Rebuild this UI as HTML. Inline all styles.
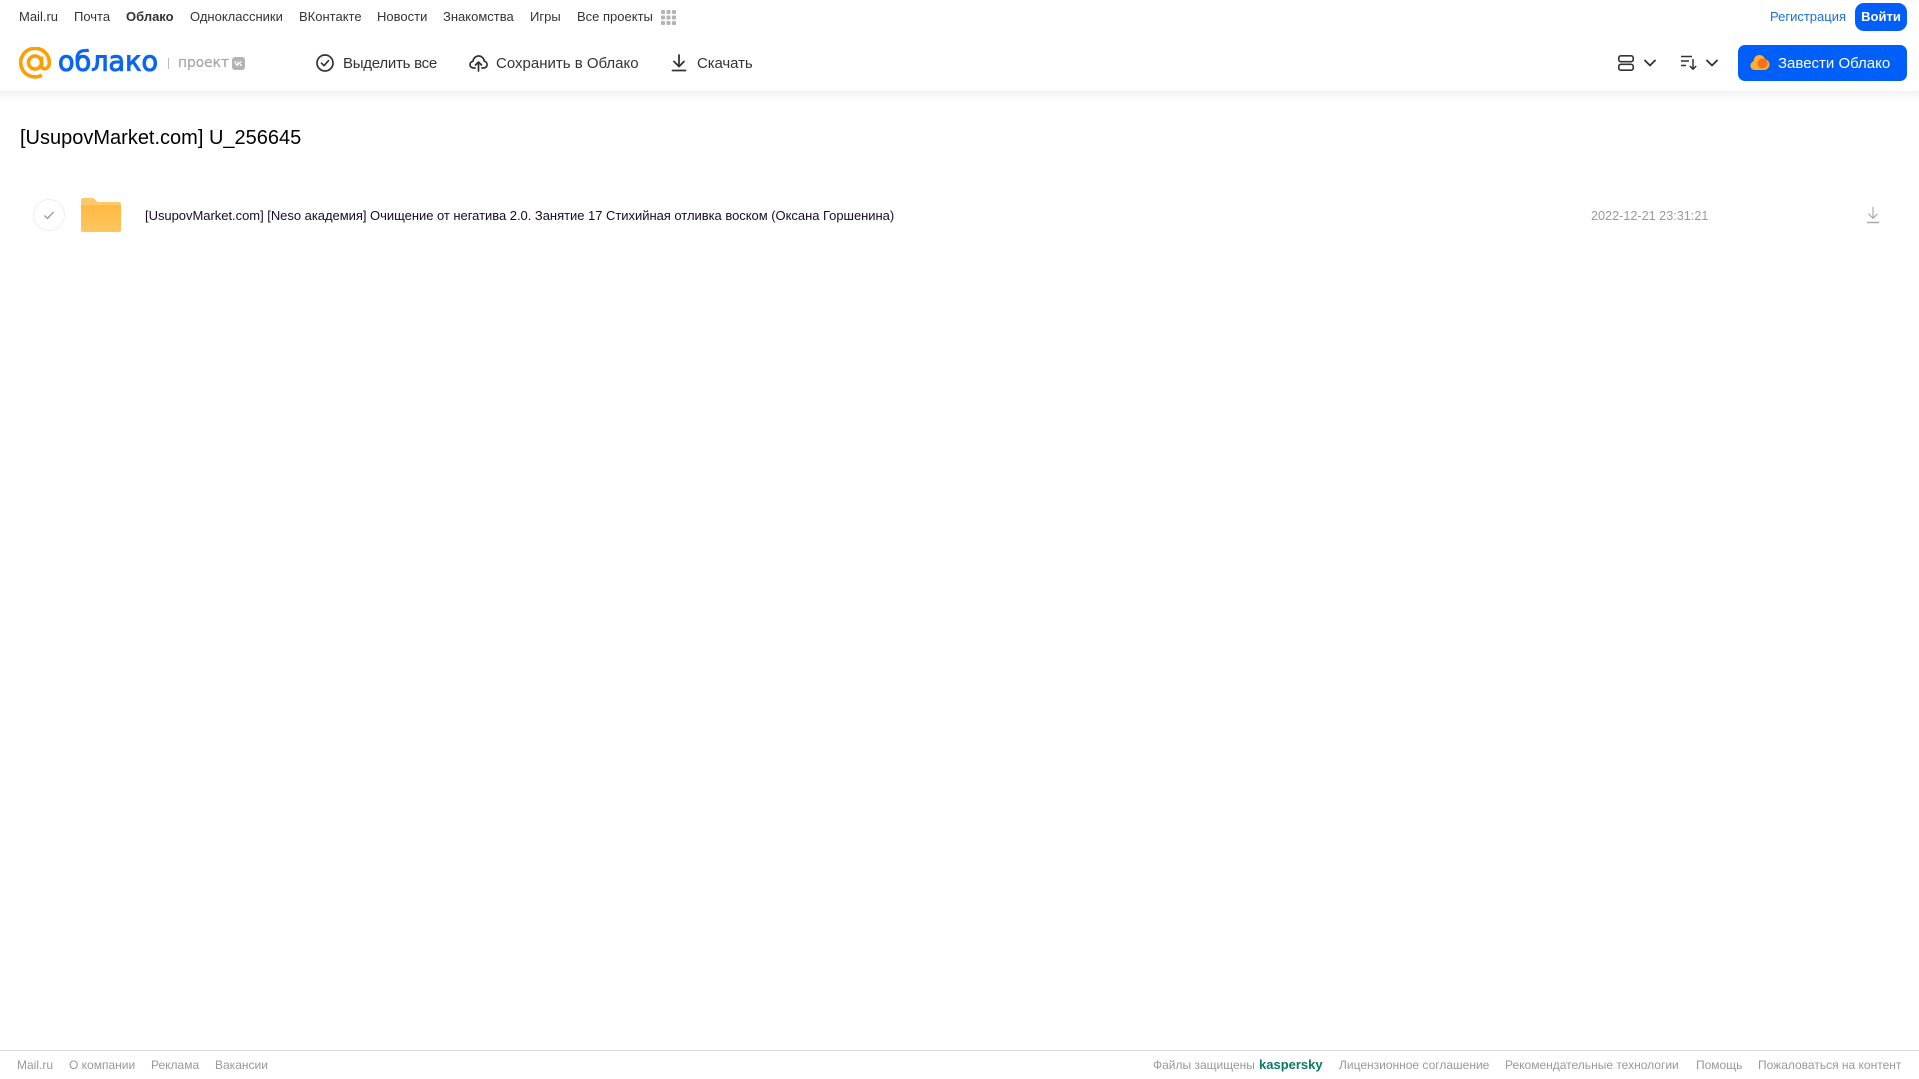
<!DOCTYPE html>
<html lang="ru">
<head>
<meta charset="utf-8">
<title>Облако</title>
<style>
html,body{margin:0;padding:0;background:#fff;}
body{width:1919px;height:1079px;position:relative;overflow:hidden;font-family:"Liberation Sans",Arial,sans-serif;}
.t{position:absolute;white-space:nowrap;line-height:20px;}
.n{top:7px;font-size:13px;color:#333;}
.a{top:54px;font-size:15px;color:#333;}
.f{top:1055px;font-size:12px;color:#999;}
svg{position:absolute;display:block;}
#shadow{position:absolute;left:0;top:91px;width:1919px;height:10px;background:linear-gradient(#f3f3f3,#fff);}
#line{position:absolute;left:0;top:1050px;width:1919px;height:1px;background:#d9d9d9;}
.btn{position:absolute;background:#005ff9;color:#fff;white-space:nowrap;}
</style>
</head>
<body>
<div id="shadow"></div>

<span class="t n" style="left:19px">Mail.ru</span>
<span class="t n" style="left:74px">Почта</span>
<span class="t n" style="left:126px;font-weight:bold">Облако</span>
<span class="t n" style="left:190px">Одноклассники</span>
<span class="t n" style="left:299px">ВКонтакте</span>
<span class="t n" style="left:377px">Новости</span>
<span class="t n" style="left:443px">Знакомства</span>
<span class="t n" style="left:530px">Игры</span>
<span class="t n" style="left:577px">Все проекты</span>
<svg style="left:661px;top:10px" width="15" height="15" viewBox="0 0 15 15" fill="#b4b4b4">
<rect x="0" y="0" width="4" height="4" rx="1"/><rect x="5.5" y="0" width="4" height="4" rx="1"/><rect x="11" y="0" width="4" height="4" rx="1"/>
<rect x="0" y="5.5" width="4" height="4" rx="1"/><rect x="5.5" y="5.5" width="4" height="4" rx="1"/><rect x="11" y="5.5" width="4" height="4" rx="1"/>
<rect x="0" y="11" width="4" height="4" rx="1"/><rect x="5.5" y="11" width="4" height="4" rx="1"/><rect x="11" y="11" width="4" height="4" rx="1"/>
</svg>

<span class="t" style="left:1770px;top:7px;font-size:13px;color:#1a6fd8">Регистрация</span>
<div class="btn" style="left:1855px;top:3px;width:52px;height:28px;border-radius:9px;font-size:13px;font-weight:bold;line-height:28px;text-align:center">Войти</div>

<!-- logo -->
<svg style="left:19px;top:47px" width="33" height="33" viewBox="0 0 33 33" fill="none" stroke="#ff9e00" stroke-width="3.600">
<circle cx="16" cy="15.500" r="6.500"/>
<path d="M22.500 9.500V18.500C22.500 23.500 30.300 23 30.300 15.500A14.300 14.300 0 1 0 22.800 28.200"/>
</svg>
<svg style="left:56px;top:42px" width="106" height="36">
<text x="2" y="28.500" font-family="'DejaVu Sans',sans-serif" font-size="28" fill="#0a66f0" stroke="#0a66f0" stroke-width="1" textLength="100" lengthAdjust="spacingAndGlyphs">облако</text>
</svg>
<div style="position:absolute;left:168px;top:58px;width:1px;height:11px;background:#bbb"></div>
<svg style="left:176px;top:52px" width="56" height="22">
<text x="2" y="15" font-family="'DejaVu Sans',sans-serif" font-size="14" fill="#a8a8a8" stroke="#a8a8a8" stroke-width=".25" textLength="51" lengthAdjust="spacingAndGlyphs">проект</text>
</svg>
<svg style="left:232px;top:57px" width="13" height="13" viewBox="0 0 13 13">
<rect width="13" height="13" rx="3" fill="#b4b4b4"/>
<path d="M2.500 4.300c.1 2.900 1.600 4.700 4 4.700V6.700c1 .1 1.700.9 2 2.300h1.400c-.3-1.300-1-2.200-1.800-2.700.7-.4 1.400-1.100 1.600-2H8.400c-.3 1-1 1.700-1.900 1.800V4.300H5.300v3.200c-.8-.2-1.500-1.400-1.600-3.200z" fill="#fff"/>
</svg>

<!-- actions -->
<svg style="left:315px;top:53px" width="20" height="20" viewBox="0 0 20 20" fill="none" stroke="#333" stroke-width="1.700">
<circle cx="10" cy="10" r="8"/><path d="M6.500 10.200l2.500 2.500 4.500-5" stroke-linecap="round" stroke-linejoin="round"/>
</svg>
<span class="t a" style="left:343px;letter-spacing:-.25px">Выделить все</span>
<svg style="left:469px;top:54px" width="19" height="18" viewBox="0 0 19 18" fill="none" stroke="#333" stroke-width="1.700" stroke-linecap="round" stroke-linejoin="round">
<path d="M6 14H4.500C2.500 14 1 12.500 1 10.700 1 9 2.200 7.600 3.900 7.400 4.300 4.300 6.700 2 9.600 2c3 0 5.300 2.200 5.700 5.200 1.600.3 2.800 1.700 2.800 3.400 0 1.900-1.500 3.400-3.400 3.400H13"/>
<path d="M9.500 17V8.500M6.500 11l3-3 3 3"/>
</svg>
<span class="t a" style="left:496px">Сохранить в Облако</span>
<svg style="left:671px;top:54px" width="16" height="18" viewBox="0 0 16 18" fill="none" stroke="#333" stroke-width="1.800" stroke-linecap="round" stroke-linejoin="round">
<path d="M8 1v11M3 7.500L8 12.500l5-5"/><path d="M1.500 16.500h13"/>
</svg>
<span class="t a" style="left:697px;letter-spacing:-.1px">Скачать</span>

<!-- right controls -->
<svg style="left:1618px;top:55px" width="16" height="16" viewBox="0 0 16 16" fill="none" stroke="#333" stroke-width="1.600">
<rect x=".8" y=".8" width="14.400" height="5.900" rx="2"/><rect x=".8" y="9.300" width="14.400" height="5.900" rx="2"/>
</svg>
<svg style="left:1644px;top:59px" width="12" height="8" viewBox="0 0 12 8" fill="none" stroke="#333" stroke-width="1.800" stroke-linecap="round" stroke-linejoin="round"><path d="M1 1.500l5 5 5-5"/></svg>
<svg style="left:1681px;top:55px" width="16" height="16" viewBox="0 0 16 16" fill="none" stroke="#333" stroke-width="1.400">
<path d="M0 1.500h11M0 6h8M0 10.500h5"/><path d="M12 4v10M8.800 11l3.200 3.200 3.200-3.200" stroke-width="1.500"/>
</svg>
<svg style="left:1706px;top:59px" width="12" height="8" viewBox="0 0 12 8" fill="none" stroke="#333" stroke-width="1.800" stroke-linecap="round" stroke-linejoin="round"><path d="M1 1.500l5 5 5-5"/></svg>

<div class="btn" style="left:1738px;top:45px;width:169px;height:36px;border-radius:7px"></div>
<svg style="left:1750px;top:54px" width="20" height="17" viewBox="0 0 20 17">
<path d="M5 16C2.200 16 .5 14 .5 11.600c0-2 1.200-3.600 3-4.200C3.800 3.500 6.300 1 9.300 1c2.700 0 5 1.700 5.800 4.200 2.500.4 4.400 2.600 4.400 5.300 0 3-2.400 5.500-5.500 5.500z" fill="#ffb02e"/>
<circle cx="12.500" cy="9.500" r="5" fill="#f5701f"/>
</svg>
<span class="t" style="left:1778px;top:54px;font-size:15px;color:#fff">Завести Облако</span>

<!-- content -->
<span class="t" style="left:20px;top:128px;font-size:20px;color:#000">[UsupovMarket.com] U_256645</span>

<svg style="left:32px;top:198px" width="34" height="34" viewBox="0 0 34 34" fill="none">
<circle cx="17" cy="17" r="15.500" stroke="#eeeeee" stroke-width="1"/>
<path d="M12.500 17.500l3 3 6-6.500" stroke="#999" stroke-width="1.300"/>
</svg>
<svg style="left:81px;top:198px" width="40" height="34" viewBox="0 0 40 34">
<defs><linearGradient id="g" x1="0" y1="0" x2="0" y2="1"><stop offset="0" stop-color="#ffb944"/><stop offset="1" stop-color="#ffc65f"/></linearGradient></defs>
<path d="M2 0h9c2 0 3 1 4 2.500C16 3.500 17 4 18 4h20c1.100 0 2 .9 2 2v26c0 1.100-.9 2-2 2H2c-1.100 0-2-.9-2-2V2C0 .9.900 0 2 0z" fill="#ffc86a"/>
<path d="M0 8.500c0-.8.700-1.500 1.500-1.500h37c.8 0 1.500.7 1.500 1.500V32c0 1.100-.9 2-2 2H2c-1.100 0-2-.9-2-2z" fill="url(#g)"/>
</svg>
<span class="t" style="left:145px;top:206px;font-size:13px;letter-spacing:-.03px;color:#1a0a2a">[UsupovMarket.com] [Neso академия] Очищение от негатива 2.0. Занятие 17 Стихийная отливка воском (Оксана Горшенина)</span>
<span class="t" style="left:1591px;top:206px;font-size:12.650px;color:#999">2022-12-21 23:31:21</span>
<svg style="left:1866px;top:206px" width="14" height="18" viewBox="0 0 14 18" fill="none" stroke="#aaa" stroke-width="1.200">
<path d="M7 1v11M2.500 7.800L7 12.300l4.500-4.500"/><path d="M1 16.500h12" stroke-width="1.500"/>
</svg>

<!-- footer -->
<div id="line"></div>
<span class="t f" style="left:17px">Mail.ru</span>
<span class="t f" style="left:69px">О компании</span>
<span class="t f" style="left:151px">Реклама</span>
<span class="t f" style="left:215px">Вакансии</span>
<span class="t f" style="left:1153px">Файлы защищены</span>
<span class="t f" style="left:1259px;font-size:13px;font-weight:bold;color:#0a7a65">kaspersky</span>
<span class="t f" style="left:1339px">Лицензионное соглашение</span>
<span class="t f" style="left:1505px">Рекомендательные технологии</span>
<span class="t f" style="left:1696px">Помощь</span>
<span class="t f" style="left:1758px">Пожаловаться на контент</span>
</body>
</html>
